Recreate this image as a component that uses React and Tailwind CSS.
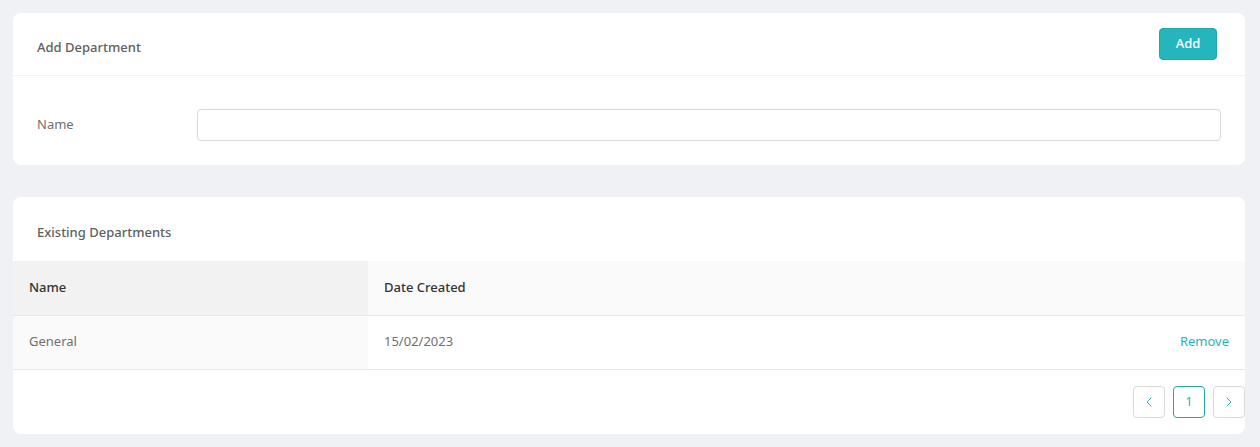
import { ChevronLeft, ChevronRight } from 'lucide-react';

const departments = [{ name: 'General', created: '15/02/2023' }];

export default function App() {
  return (
    <div
      className="min-h-[447px] bg-[#f0f1f5] pl-[13px] pr-[15px] pt-[13px] pb-[14px]"
      style={{ fontFamily: '"Noto Sans", "Open Sans", sans-serif' }}
    >
      <div className="rounded-lg bg-white">
        <div className="flex h-[63px] items-center justify-between border-b border-[#f2f2f2] pl-6 pr-7">
          <h2 className="pt-2 text-[13px] font-medium text-[#606060]">Add Department</h2>
          <button className="h-8 w-[58px] rounded border border-[#1fa9ae] bg-[#24b6bc] text-[13px] font-medium text-white">
            Add
          </button>
        </div>
        <div className="flex items-center pt-[33px] pb-[24px] pl-6 pr-6">
          <label className="w-[160px] text-[13px] text-[#707070]">Name</label>
          <input className="h-8 flex-1 rounded border border-[#d9d9d9] px-3 text-[13px] outline-none" />
        </div>
      </div>

      <div className="mt-[32px] rounded-lg bg-white">
        <div className="flex h-[64px] items-center pl-6 pt-2">
          <h2 className="text-[13px] font-medium text-[#606060]">Existing Departments</h2>
        </div>
        <table className="w-full border-collapse text-[13px]">
          <thead>
            <tr className="h-[54px] border-b border-[#e8e8e8] text-left">
              <th className="w-[355px] bg-[#f2f2f2] pl-4 font-medium text-[#333]">Name</th>
              <th className="bg-[#fafafa] pl-4 font-medium text-[#333]">Date Created</th>
              <th className="bg-[#fafafa]"></th>
            </tr>
          </thead>
          <tbody>
            {departments.map((d) => (
              <tr key={d.name} className="h-[54px] border-b border-[#e8e8e8]">
                <td className="bg-[#fafafa] pl-4 text-[#707070]">{d.name}</td>
                <td className="pl-4 text-[#707070]">{d.created}</td>
                <td className="pr-4 text-right text-[#24b6bc]">Remove</td>
              </tr>
            ))}
          </tbody>
        </table>
        <div className="flex h-[64px] items-center justify-end gap-2">
          <button className="flex h-8 w-8 items-center justify-center rounded border border-[#d9d9d9] text-[#24b6bc]">
            <ChevronLeft size={16} strokeWidth={1.5} />
          </button>
          <button className="flex h-8 w-8 items-center justify-center rounded border border-[#1fa9ae] text-[13px] text-[#24b6bc]">
            1
          </button>
          <button className="flex h-8 w-8 items-center justify-center rounded border border-[#d9d9d9] text-[#24b6bc]">
            <ChevronRight size={16} strokeWidth={1.5} />
          </button>
        </div>
      </div>
    </div>
  );
}
